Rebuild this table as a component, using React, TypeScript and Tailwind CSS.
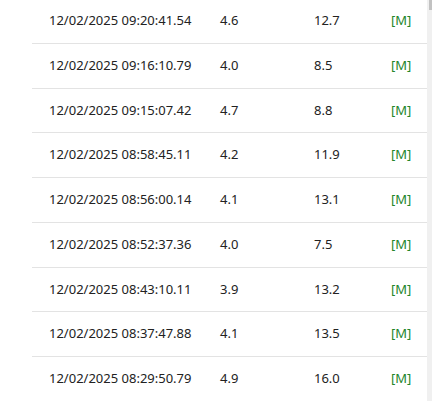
const rows = [
  { time: '12/02/2025 09:20:41.54', mag: '4.6', depth: '12.7' },
  { time: '12/02/2025 09:16:10.79', mag: '4.0', depth: '8.5' },
  { time: '12/02/2025 09:15:07.42', mag: '4.7', depth: '8.8' },
  { time: '12/02/2025 08:58:45.11', mag: '4.2', depth: '11.9' },
  { time: '12/02/2025 08:56:00.14', mag: '4.1', depth: '13.1' },
  { time: '12/02/2025 08:52:37.36', mag: '4.0', depth: '7.5' },
  { time: '12/02/2025 08:43:10.11', mag: '3.9', depth: '13.2' },
  { time: '12/02/2025 08:37:47.88', mag: '4.1', depth: '13.5' },
  { time: '12/02/2025 08:29:50.79', mag: '4.9', depth: '16.0' },
]

export default function App() {
  return (
    <div
      className="flex h-[401px] w-[432px] overflow-hidden bg-white text-[13px] text-[#222]"
      style={{ fontFamily: '"Noto Sans", "Open Sans", sans-serif' }}
    >
      <div className="w-[32px] shrink-0" />
      <div className="mt-[-1px] flex-1">
        {rows.map((r) => (
          <div
            key={r.time}
            className="grid h-[44.75px] grid-cols-[171px_94px_77px_auto] items-center border-b border-[#e3e3e3] pl-[17px]"
          >
            <span>{r.time}</span>
            <span>{r.mag}</span>
            <span>{r.depth}</span>
            <span className="text-[#23862a]">[M]</span>
          </div>
        ))}
      </div>
      <div className="relative w-[5px] shrink-0 bg-[#f0f0f0]">
        <div className="absolute right-0 top-0 h-[10px] w-[3px] bg-[#c2c2c2]" />
      </div>
    </div>
  )
}
